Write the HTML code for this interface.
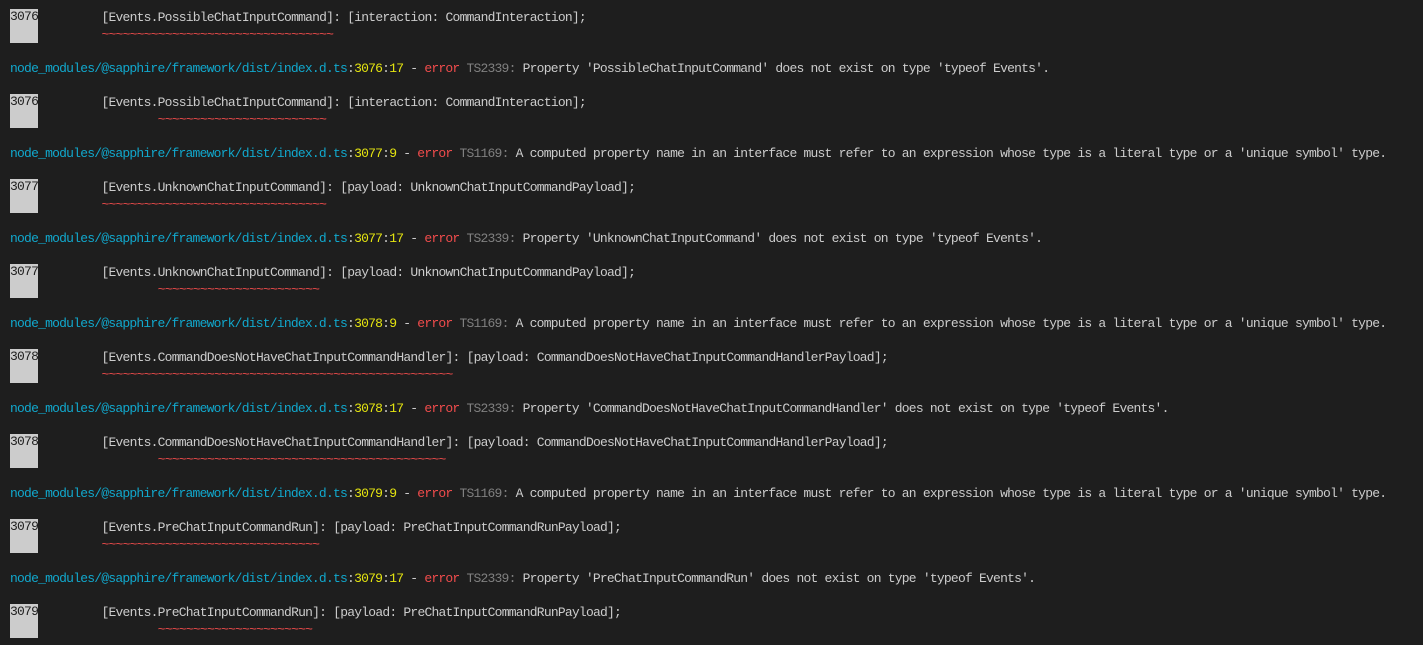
<!DOCTYPE html>
<html><head><meta charset="utf-8"><style>
html,body{margin:0;padding:0;background:#1e1e1e;width:1423px;height:645px;overflow:hidden}
pre{margin:0;padding:9px 0 0 10px;font-family:"Liberation Mono",monospace;font-size:13px;letter-spacing:-0.78px;line-height:17px;color:#cccccc;white-space:pre}
.n{display:inline-block;height:17px;width:28.3px;background:#cccccc;color:#1e1e1e;vertical-align:top;line-height:15px}
.c{color:#11a8cd}.y{color:#e5e510}.r{color:#f14c4c}.g{color:#808080}
.t{color:#f14c4c}
</style></head><body><pre><span class="n">3076</span>         [Events.PossibleChatInputCommand]: [interaction: CommandInteraction];
<span class="n">    </span>         <span class="t">~~~~~~~~~~~~~~~~~~~~~~~~~~~~~~~~~</span>

<span class="c">node_modules/@sapphire/framework/dist/index.d.ts</span>:<span class="y">3076</span>:<span class="y">17</span> - <span class="r">error</span> <span class="g">TS2339:</span> Property 'PossibleChatInputCommand' does not exist on type 'typeof Events'.

<span class="n">3076</span>         [Events.PossibleChatInputCommand]: [interaction: CommandInteraction];
<span class="n">    </span>                 <span class="t">~~~~~~~~~~~~~~~~~~~~~~~~</span>

<span class="c">node_modules/@sapphire/framework/dist/index.d.ts</span>:<span class="y">3077</span>:<span class="y">9</span> - <span class="r">error</span> <span class="g">TS1169:</span> A computed property name in an interface must refer to an expression whose type is a literal type or a 'unique symbol' type.

<span class="n">3077</span>         [Events.UnknownChatInputCommand]: [payload: UnknownChatInputCommandPayload];
<span class="n">    </span>         <span class="t">~~~~~~~~~~~~~~~~~~~~~~~~~~~~~~~~</span>

<span class="c">node_modules/@sapphire/framework/dist/index.d.ts</span>:<span class="y">3077</span>:<span class="y">17</span> - <span class="r">error</span> <span class="g">TS2339:</span> Property 'UnknownChatInputCommand' does not exist on type 'typeof Events'.

<span class="n">3077</span>         [Events.UnknownChatInputCommand]: [payload: UnknownChatInputCommandPayload];
<span class="n">    </span>                 <span class="t">~~~~~~~~~~~~~~~~~~~~~~~</span>

<span class="c">node_modules/@sapphire/framework/dist/index.d.ts</span>:<span class="y">3078</span>:<span class="y">9</span> - <span class="r">error</span> <span class="g">TS1169:</span> A computed property name in an interface must refer to an expression whose type is a literal type or a 'unique symbol' type.

<span class="n">3078</span>         [Events.CommandDoesNotHaveChatInputCommandHandler]: [payload: CommandDoesNotHaveChatInputCommandHandlerPayload];
<span class="n">    </span>         <span class="t">~~~~~~~~~~~~~~~~~~~~~~~~~~~~~~~~~~~~~~~~~~~~~~~~~~</span>

<span class="c">node_modules/@sapphire/framework/dist/index.d.ts</span>:<span class="y">3078</span>:<span class="y">17</span> - <span class="r">error</span> <span class="g">TS2339:</span> Property 'CommandDoesNotHaveChatInputCommandHandler' does not exist on type 'typeof Events'.

<span class="n">3078</span>         [Events.CommandDoesNotHaveChatInputCommandHandler]: [payload: CommandDoesNotHaveChatInputCommandHandlerPayload];
<span class="n">    </span>                 <span class="t">~~~~~~~~~~~~~~~~~~~~~~~~~~~~~~~~~~~~~~~~~</span>

<span class="c">node_modules/@sapphire/framework/dist/index.d.ts</span>:<span class="y">3079</span>:<span class="y">9</span> - <span class="r">error</span> <span class="g">TS1169:</span> A computed property name in an interface must refer to an expression whose type is a literal type or a 'unique symbol' type.

<span class="n">3079</span>         [Events.PreChatInputCommandRun]: [payload: PreChatInputCommandRunPayload];
<span class="n">    </span>         <span class="t">~~~~~~~~~~~~~~~~~~~~~~~~~~~~~~~</span>

<span class="c">node_modules/@sapphire/framework/dist/index.d.ts</span>:<span class="y">3079</span>:<span class="y">17</span> - <span class="r">error</span> <span class="g">TS2339:</span> Property 'PreChatInputCommandRun' does not exist on type 'typeof Events'.

<span class="n">3079</span>         [Events.PreChatInputCommandRun]: [payload: PreChatInputCommandRunPayload];
<span class="n">    </span>                 <span class="t">~~~~~~~~~~~~~~~~~~~~~~</span>
</pre></body></html>
